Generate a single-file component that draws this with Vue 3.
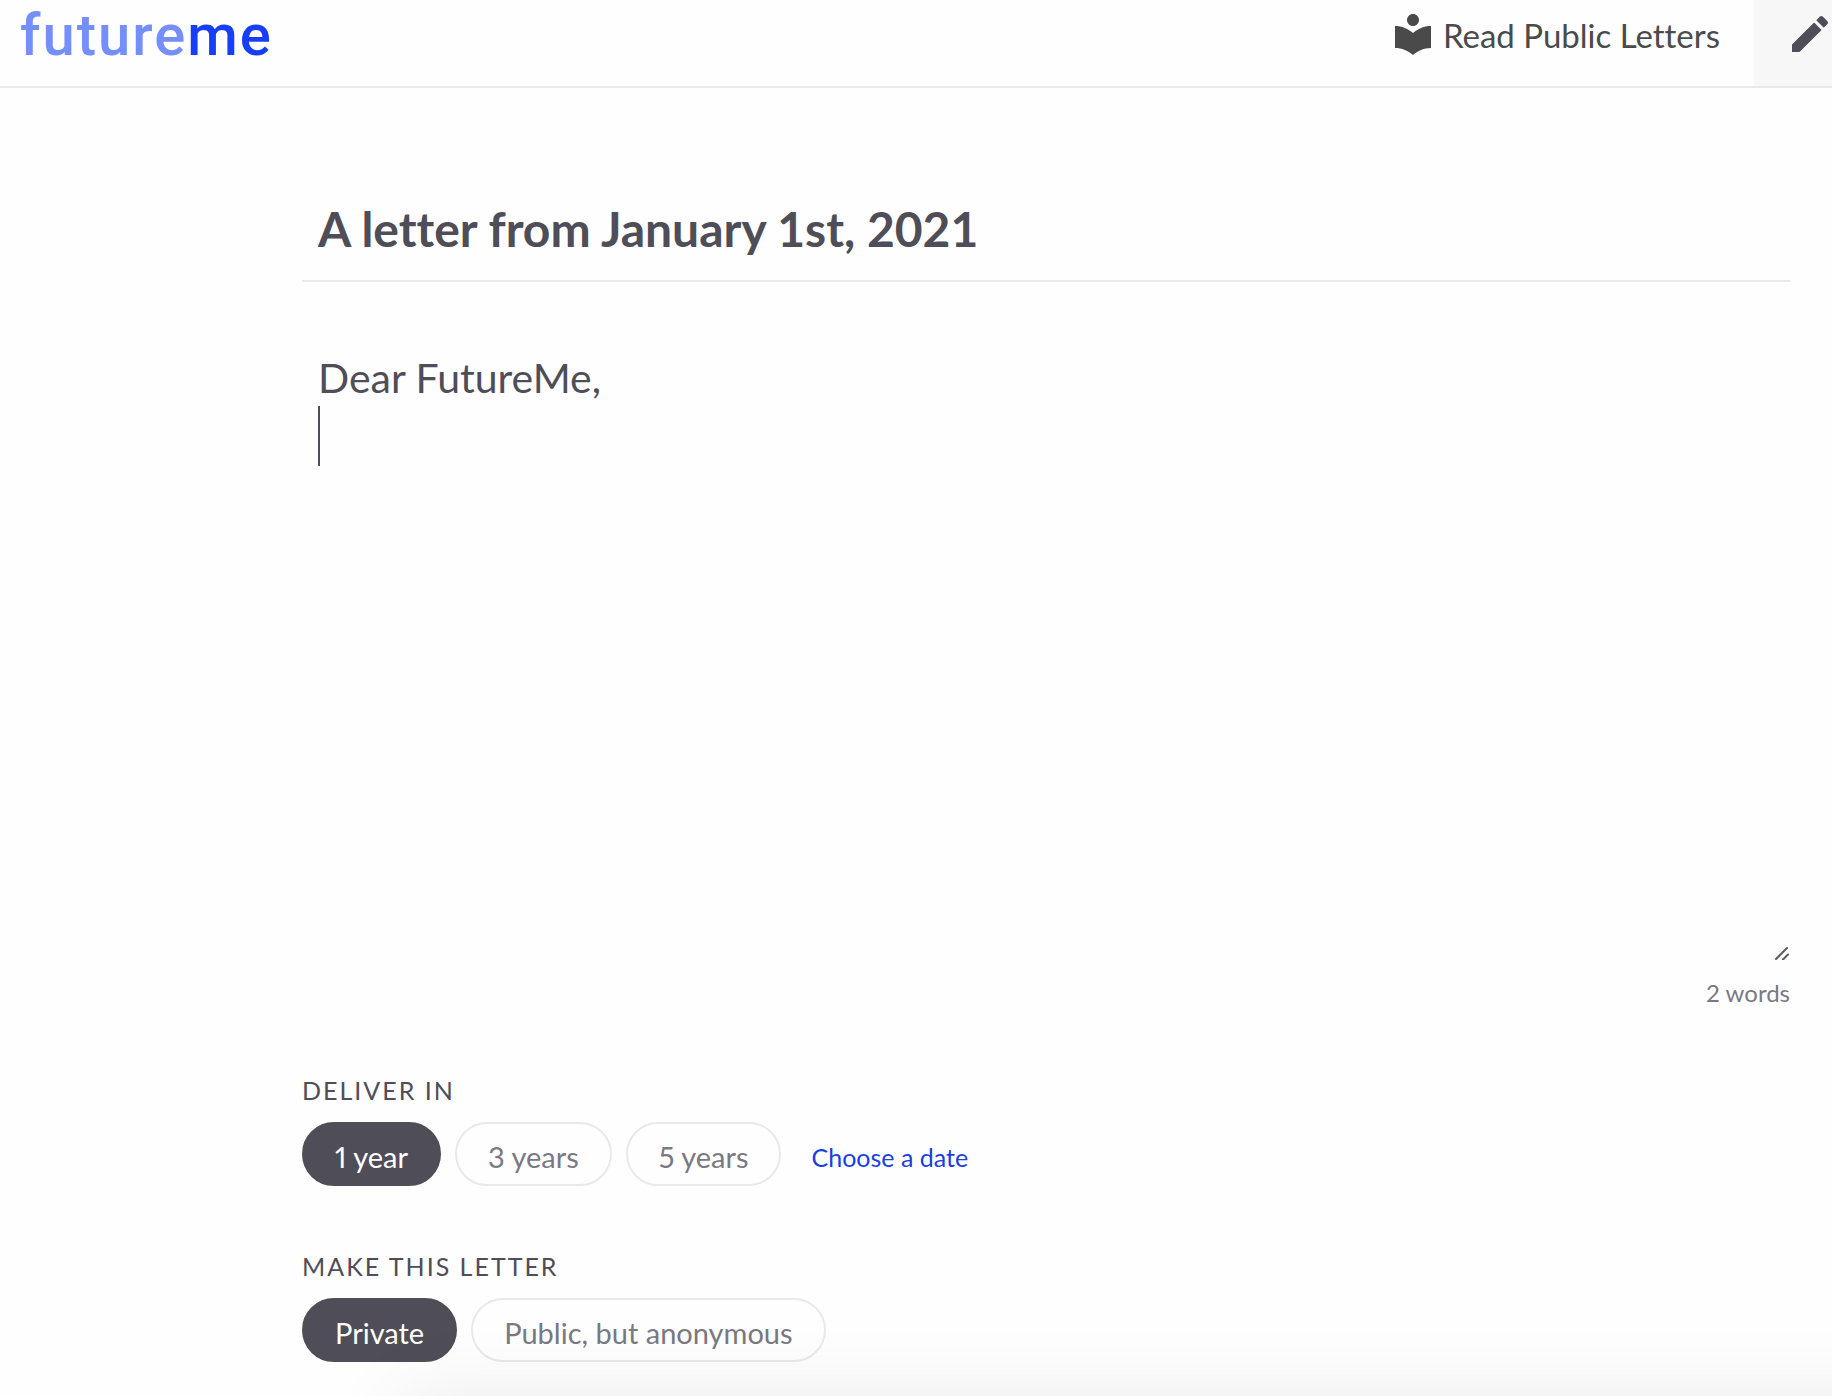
<script setup>
import { ref, computed } from 'vue'

const subject = ref('A letter from January 1st, 2021')
const body = ref('Dear FutureMe,\n')
const delivery = ref('1 year')
const visibility = ref('Private')

const deliveryOptions = ['1 year', '3 years', '5 years']
const visibilityOptions = ['Private', 'Public, but anonymous']

const wordCount = computed(() => body.value.split(/\s+/).filter(Boolean).length)
</script>

<template>
  <div class="page">
    <header class="header">
      <a class="logo" href="#">future<strong>me</strong></a>
      <nav class="nav">
        <a class="nav-link" href="#">
          <svg class="icon" viewBox="0 0 24 24" aria-hidden="true">
            <path d="M12 11.55C9.64 9.35 6.48 8 3 8v11c3.48 0 6.64 1.35 9 3.55 2.36-2.19 5.52-3.55 9-3.55V8c-3.48 0-6.64 1.35-9 3.55zM12 8c1.66 0 3-1.34 3-3s-1.34-3-3-3-3 1.34-3 3 1.34 3 3 3z" />
          </svg>
          <span>Read Public Letters</span>
        </a>
        <a class="nav-link nav-write" href="#" aria-label="Write">
          <svg class="icon" viewBox="0 0 24 24" aria-hidden="true">
            <path d="M3 17.25V21h3.75L17.81 9.94l-3.75-3.75L3 17.25zM20.71 7.04c.39-.39.39-1.02 0-1.41l-2.34-2.34c-.39-.39-1.02-.39-1.41 0l-1.83 1.83 3.75 3.75 1.83-1.83z" />
          </svg>
        </a>
      </nav>
    </header>

    <form class="letter" @submit.prevent>
      <input v-model="subject" class="subject" type="text" aria-label="Subject" />

      <div class="body-wrap">
        <textarea v-model="body" class="body" aria-label="Letter" spellcheck="false"></textarea>
        <span class="caret"></span>
        <svg class="grip" viewBox="0 0 14 14" aria-hidden="true">
          <path d="M1 13L12 2M8 13.500L13 8.500" />
        </svg>
      </div>
      <p class="words">{{ wordCount }} words</p>

      <fieldset class="group">
        <legend>DELIVER IN</legend>
        <div class="pills">
          <label v-for="option in deliveryOptions" :key="option" class="pill" :class="{ active: delivery === option }">
            <input v-model="delivery" type="radio" name="delivery" :value="option" />
            {{ option }}
          </label>
          <a class="choose" href="#">Choose a date</a>
        </div>
      </fieldset>

      <fieldset class="group">
        <legend>MAKE THIS LETTER</legend>
        <div class="pills">
          <label v-for="option in visibilityOptions" :key="option" class="pill" :class="{ active: visibility === option }">
            <input v-model="visibility" type="radio" name="visibility" :value="option" />
            {{ option }}
          </label>
        </div>
      </fieldset>
    </form>

    <div class="send-bar"></div>
  </div>
</template>

<style>
body {
  margin: 0;
  background: #fefefe;
}
</style>

<style scoped>
.page {
  min-height: 100vh;
  overflow: hidden;
  box-sizing: border-box;
  font-family: Lato, "Open Sans", sans-serif;
  font-variant-ligatures: none;
  color: #4f4d57;
}

.header {
  display: flex;
  justify-content: space-between;
  height: 86px;
  border-bottom: 2px solid #e9e9e9;
}

.logo {
  padding-left: 20px;
  font-family: Roboto, sans-serif;
  font-size: 58px;
  font-weight: 500;
  line-height: 70px;
  letter-spacing: 2px;
  color: #748efb;
  text-decoration: none;
}

.logo strong {
  font-weight: 500;
  color: #173ef9;
}

.nav {
  display: flex;
  margin-right: -2px;
}

.nav-link {
  display: flex;
  gap: 6px;
  padding: 10px 34px 0 0;
  font-size: 33px;
  line-height: 50px;
  color: #4a4a4a;
  text-decoration: none;
}

.nav-write {
  padding: 10px 0 0 32px;
  background: #f7f7f7;
  color: #4f4d57;
}

.icon {
  width: 48px;
  height: 48px;
  flex: none;
  fill: currentColor;
}

.letter {
  margin: 0 42px 0 302px;
  padding-top: 92px;
}

.subject {
  display: block;
  width: 100%;
  height: 102px;
  box-sizing: border-box;
  padding: 0 16px 4px;
  border: 0;
  border-bottom: 2px solid #e9e9e9;
  outline: none;
  background: none;
  font-family: inherit;
  font-size: 48px;
  font-weight: bold;
  font-variant: inherit;
  color: inherit;
}

.body-wrap {
  position: relative;
  margin-top: 50px;
}

.body {
  display: block;
  width: 100%;
  height: 630px;
  box-sizing: border-box;
  padding: 16px;
  border: 0;
  outline: none;
  resize: none;
  background: none;
  font-family: inherit;
  font-size: 41px;
  line-height: 60px;
  font-variant: inherit;
  color: inherit;
}

.caret {
  position: absolute;
  top: 74px;
  left: 16px;
  width: 2px;
  height: 60px;
  background: #4f4d57;
}

.grip {
  position: absolute;
  right: 1px;
  bottom: 2px;
  width: 14px;
  height: 14px;
  fill: none;
  stroke: #5c5c5c;
  stroke-width: 2;
  stroke-linecap: round;
}

.words {
  margin: 15px 0 0;
  font-size: 24px;
  line-height: 32px;
  text-align: right;
  color: #7a7982;
}

.group {
  margin: 65px 0 0;
  padding: 0;
  border: 0;
  min-width: 0;
}

.group + .group {
  margin-top: 64px;
}

.group legend {
  padding: 0;
  font-size: 25px;
  line-height: 32px;
  letter-spacing: 2px;
}

.pills {
  display: flex;
  align-items: center;
  gap: 14px;
  padding-top: 16px;
}

.pill {
  position: relative;
  height: 64px;
  box-sizing: border-box;
  padding: 4px 31px 0;
  border: 2px solid #e9e9e9;
  border-radius: 32px;
  font-size: 29px;
  font-variant-numeric: proportional-nums;
  line-height: 58px;
  color: #7a7982;
  cursor: pointer;
}

.pill.active {
  border-color: #4f4d57;
  background: #4f4d57;
  color: #fff;
}

.pill input {
  position: absolute;
  inset: 0;
  margin: 0;
  opacity: 0;
}

.choose {
  padding: 6px 0 0 16px;
  font-size: 25px;
  line-height: 58px;
  color: #1a3fe0;
  text-decoration: none;
}

.send-bar {
  position: fixed;
  top: 100%;
  left: 400px;
  right: -80px;
  height: 120px;
  box-shadow: 0 0 80px rgba(0, 0, 0, 0.08);
}
</style>
